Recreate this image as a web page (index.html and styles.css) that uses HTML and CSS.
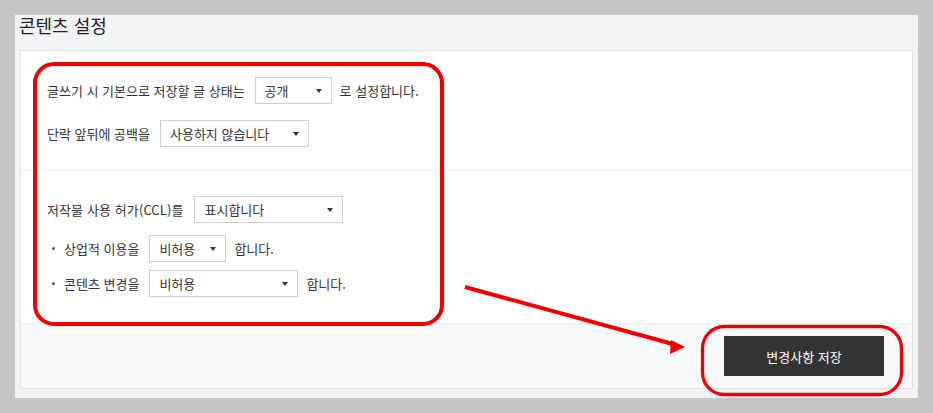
FILE: index.html
```html
<!DOCTYPE html>
<html lang="ko">
<head>
<meta charset="utf-8">
<link rel="stylesheet" href="styles.css">
</head>
<body>
<div class="page">
  <h2 class="title">콘텐츠 설정</h2>
  <div class="card">
    <div class="section s1">
      <div class="row">
        <span class="label">글쓰기 시 기본으로 저장할 글 상태는</span>
        <div class="select w77"><span>공개</span><i class="caret"></i></div>
        <span class="after">로 설정합니다.</span>
      </div>
      <div class="row r2">
        <span class="label">단락 앞뒤에 공백을</span>
        <div class="select w149"><span>사용하지 않습니다</span><i class="caret"></i></div>
      </div>
    </div>
    <div class="section s2">
      <div class="row">
        <span class="label ccl">저작물 사용 허가(CCL)를</span>
        <div class="select w149"><span>표시합니다</span><i class="caret"></i></div>
      </div>
      <div class="row bullet b1">
        <span class="dot"></span>
        <span class="label">상업적 이용을</span>
        <div class="select w77"><span>비허용</span><i class="caret"></i></div>
        <span class="after">합니다.</span>
      </div>
      <div class="row bullet b2">
        <span class="dot"></span>
        <span class="label">콘텐츠 변경을</span>
        <div class="select w149"><span>비허용</span><i class="caret"></i></div>
        <span class="after">합니다.</span>
      </div>
    </div>
    <div class="footer">
      <button class="save">변경사항 저장</button>
    </div>
  </div>
</div>
<svg class="marks" width="933" height="413" viewBox="0 0 933 413">
  <rect x="35" y="64" width="407" height="260" rx="19" ry="19" fill="none" stroke="#f00000" stroke-width="4"/>
  <rect x="702.5" y="326.5" width="199" height="68" rx="22" ry="22" fill="none" stroke="#f00000" stroke-width="3.3"/>
  <line x1="465" y1="287" x2="673" y2="344" stroke="#f00000" stroke-width="4"/>
  <polygon points="671,340 685,347 670,354" fill="#f00000"/>
</svg>
</body>
</html>
```

FILE: styles.css
```css
html, body {
  margin: 0;
  padding: 0;
}
body {
  background: #c4c5c7;
  width: 933px;
  height: 413px;
  position: relative;
  font-family: "Noto Sans CJK KR", "Noto Sans", sans-serif;
  color: #333;
  overflow: hidden;
}
.page {
  margin: 15px 0 0 15px;
  width: 903px;
  height: 383px;
  background: #f2f3f5;
  box-sizing: border-box;
  padding: 0 5px 0 5px;
  display: flex;
  flex-direction: column;
}
.title {
  margin: 0 0 15px -1px;
  padding-top: 1px;
  font-size: 18px;
  font-weight: 400;
  line-height: 19px;
  height: 19px;
  color: #1f1f1f;
}
.card {
  background: #fff;
  border: 1px solid #e2e3e5;
  height: 339px;
  box-sizing: border-box;
  display: flex;
  flex-direction: column;
}
.section {
  padding-left: 26px;
  display: flex;
  flex-direction: column;
}
.s1 {
  padding-top: 26px;
  height: 120px;
  box-sizing: border-box;
  border-bottom: 1px solid #eeeff1;
}
.s1 .r2 { margin-top: 16px; }
.s2 {
  padding-top: 25px;
  height: 152px;
  box-sizing: border-box;
}
.s2 .b1 { margin-top: 12px; }
.s2 .b2 { margin-top: 8px; }
.row {
  display: flex;
  align-items: center;
  font-size: 13px;
  line-height: 16px;
  height: 27px;
}
.label { margin-right: 10px; }
.ccl { margin-right: 11px; letter-spacing: 0.1px; }
.after { margin-left: 8px; }
.bullet { padding-left: 5px; }
.dot {
  width: 3px;
  height: 3px;
  background: #555;
  border-radius: 50%;
  margin-right: 9px;
}
.select {
  height: 27px;
  box-sizing: border-box;
  border: 1px solid #cdcdcd;
  background: #fff;
  display: flex;
  align-items: center;
  justify-content: space-between;
  padding: 0 9px 0 9px;
  font-size: 13px;
  color: #333;
}
.w77 { width: 77px; }
.w149 { width: 149px; }
.caret {
  width: 0;
  height: 0;
  border-left: 3.5px solid transparent;
  border-right: 3.5px solid transparent;
  border-top: 4px solid #333;
  margin-top: 1px;
}
.footer {
  margin-top: auto;
  height: 65px;
  background: #f8f9fa;
  border-top: 1px solid #eeeff1;
  box-sizing: border-box;
  display: flex;
  justify-content: flex-end;
  align-items: flex-start;
  padding: 12px 28px 0 0;
}
.save {
  width: 160px;
  height: 40px;
  background: #333;
  color: #fff;
  border: 0;
  font-family: "Noto Sans CJK KR", "Noto Sans", sans-serif;
  font-size: 13px;
  font-weight: 400;
  padding: 0;
}
.marks {
  position: absolute;
  left: 0;
  top: 0;
  pointer-events: none;
}
```
